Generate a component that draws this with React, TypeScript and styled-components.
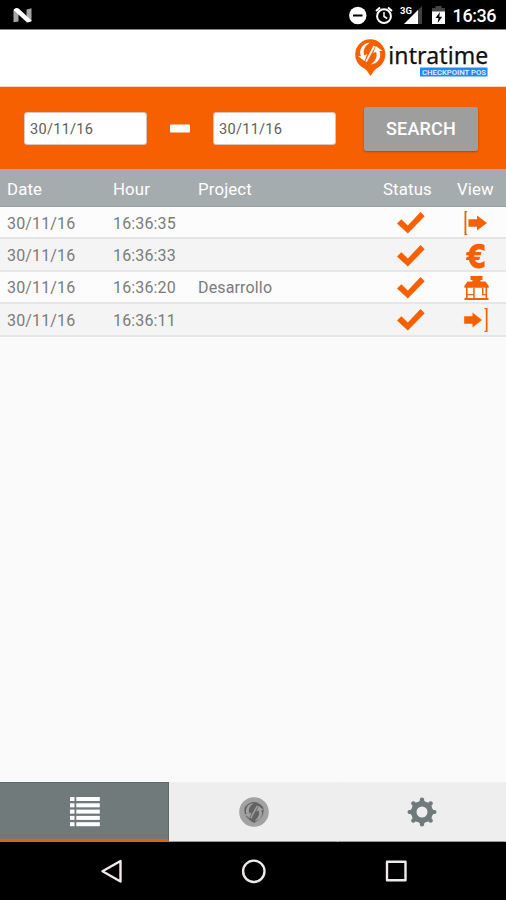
import React from "react";
import styled, { createGlobalStyle } from "styled-components";

const ORANGE = "#f66000";

const GlobalStyle = createGlobalStyle`
  html, body { margin: 0; padding: 0; }
  body { font-family: Roboto, "Liberation Sans", sans-serif; background: #fafafa; }
  *, *::before, *::after { box-sizing: border-box; }
  svg { display: block; }
`;

const Screen = styled.div`
  width: 506px;
  height: 900px;
  display: flex;
  flex-direction: column;
  overflow: hidden;
  background: #fafafa;
`;

const StatusBar = styled.div`
  height: 30px;
  flex: none;
  background: #000;
  border-bottom: 1px solid #8a8a8a;
  display: flex;
  justify-content: space-between;
`;

const Brand = styled.header`
  height: 57px;
  flex: none;
  background: #fff;
  border-bottom: 1px solid #fbd9c3;
  display: flex;
  justify-content: flex-end;
`;

const SearchBar = styled.form`
  height: 82px;
  flex: none;
  margin: 0;
  padding: 1px 28px 0 24px;
  background: ${ORANGE};
  display: flex;
  align-items: center;
`;

const DateInput = styled.input`
  width: 123px;
  height: 33px;
  padding: 1px 0 0 5px;
  border: 1px solid #d5c5ba;
  border-radius: 3px;
  outline: none;
  background: #fff;
  color: #5c5c5c;
  font: 400 14.6px Roboto, sans-serif;
  letter-spacing: 0.25px;
`;

const Dash = styled.span`
  width: 20px;
  height: 8px;
  margin: 0 23px;
  border-radius: 1px;
  background: #fff;
  transform: translateY(-0.5px);
`;

const SearchButton = styled.button`
  width: 114px;
  height: 44px;
  margin-left: auto;
  padding: 0;
  border: 0;
  border-radius: 2px;
  background: #9e9e9e;
  box-shadow: 0 1px 2px rgba(90, 40, 0, 0.45);
  color: #fff;
  font: 500 18px Roboto, sans-serif;
  letter-spacing: 0.2px;
`;

const Table = styled.div`
  flex: 1;
  display: flex;
  flex-direction: column;
`;

const Row = styled.div<{ $shaded?: boolean }>`
  height: 32.4px;
  display: grid;
  grid-template-columns: 106px 85px 185px 70px 60px;
  align-items: center;
  padding: 2px 0 0 7px;
  margin-right: -7px;
  background: ${(p) => (p.$shaded ? "#f4f4f4" : "#fcfcfc")};
  border-bottom: 2px solid #e6e6e6;
  color: #7b7b7b;
  font-size: 16px;
  letter-spacing: 0.15px;
`;

const HeaderRow = styled(Row)`
  height: 38px;
  grid-template-columns: 106px 85px 185px 74px 60px;
  background: #a4acae;
  border-bottom: 1px solid #999fa1;
  color: #fff;
  font-size: 16.8px;
`;

const IconCell = styled.span`
  display: flex;
  justify-content: flex-start;
`;

const CheckCell = styled(IconCell)`
  padding-left: 14px;
`;

const ViewCell = styled(IconCell)`
  padding-left: 10px;
`;

const Tabs = styled.nav`
  height: 60px;
  flex: none;
  display: grid;
  grid-template-columns: 169px 169px 168px;
  background: #eee;
`;

const Tab = styled.div<{ $active?: boolean }>`
  display: flex;
  align-items: center;
  justify-content: center;
  background: ${(p) => (p.$active ? "#707a7a" : "#eeeeee")};
  border-top: 1px solid ${(p) => (p.$active ? "#5f6868" : "#f1f1f1")};
  border-right: 1px solid ${(p) => (p.$active ? "#5f6868" : "#eeeeee")};
  border-bottom: ${(p) => (p.$active ? "3px solid #d9650f" : "1px solid #999")};
  padding: ${(p) => (p.$active ? "2px 0 0 1px" : "0 0 0 1px")};
`;

const NavBar = styled.div`
  height: 58px;
  flex: none;
  background: #000;
`;

const Notification = () => (
  <svg width="60" height="29" viewBox="0 0 60 29">
    <path d="M13.5 9.5l5-1v13l-5 .8zM26.5 9.5l5-1.3v13.4l-5 .8z" fill="#a5a5a5" />
    <path d="M14 9.3q2.5-2.2 5.2-.3L31.5 20.5q-2.4 3-5.5.9L14 10.5z" fill="#fff" />
  </svg>
);

const StatusIcons = () => (
  <svg width="170" height="29" viewBox="336 0 170 29" fontFamily="Roboto, sans-serif">
    <circle cx="357.8" cy="15.5" r="8.7" fill="#fff" />
    <path d="M353 15.5h9.5" stroke="#000" strokeWidth="2" />
    <g fill="none" stroke="#fff" strokeWidth="2">
      <circle cx="384" cy="16.2" r="6.9" />
      <path d="M384 12v4.5l3.2 2" strokeWidth="1.5" />
      <path d="M376 11l4-3.6M392 11l-4-3.6" />
    </g>
    <text x="400" y="14" fontSize="9.5" fontWeight="700" fill="#fff" textLength="12">3G</text>
    <path d="M404 24L422 6v18z" fill="#414141" />
    <path d="M404 24L418 10v14z" fill="#fff" />
    <path d="M432 10V8h3.5V6h6v2h3.5v4h-13z" fill="#454545" />
    <path d="M432 11.5h13V24h-13z" fill="#fff" />
    <path d="M440 12l-4.5 6h3l-.8 5 4.5-6.3h-3z" fill="#000" />
    <text x="452.6" y="22" fontSize="18" fontWeight="500" fill="#fff" textLength="44">16:36</text>
  </svg>
);

const SwirlArrows = () => (
  <>
    <path d="M-2.500-10.500C-9.500-9-12.500-1-8.500 4.500L-11.500 5l7.500 3.500 1.200-7.500-2.500 2C-8-1-7-6.500-2.500-10.500z" />
    <path d="M2.500 10.500C9.500 9 12.500 1 8.500-4.500L11.500-5l-7.500-3.500-1.200 7.500 2.500-2C8 1 7 6.500 2.500 10.500z" />
    <path d="M-3.200 8.500L1.600-8.600l1.800.6L-1.500 9z" />
  </>
);

const Logo = () => (
  <svg width="166" height="56" viewBox="340 30 166 56">
    <path
      d="M370.300 39.300a15 15 0 0 1 15 15c0 7.500-4.500 12-8.800 14.200q-3 2-6 7.500-3-5.500-6-7.400c-5-2.800-9.300-6.800-9.300-14.300a15 15 0 0 1 15.100-15z"
      fill={ORANGE}
    />
    <g transform="translate(370.200 53.600) rotate(12)" fill="#fff">
      <SwirlArrows />
    </g>
    <text x="388.300" y="64.300" fontFamily="Noto Sans, sans-serif" fontWeight="400" fontSize="23" fill="#111" stroke="#111" strokeWidth="0.250" textLength="100" lengthAdjust="spacing">
      intratime
    </text>
    <rect x="420" y="67.500" width="67.500" height="9" fill="#2389f5" />
    <text x="422" y="75" fontFamily="Roboto, sans-serif" fontWeight="500" fontSize="8" fill="#e8f3ff" textLength="64" lengthAdjust="spacingAndGlyphs">
      CHECKPOINT POS
    </text>
  </svg>
);

const Check = () => (
  <svg width="28" height="22" viewBox="0 0 28 22">
    <path d="M0 11.500l4.300-4.300 6.500 6.300L23.500 0l4.200 4.300L10.800 21.500z" fill={ORANGE} />
  </svg>
);

type ViewKind = "exit" | "euro" | "office" | "enter";

const ViewIcon = ({ kind }: { kind: ViewKind }) => (
  <svg width="28" height="26" viewBox="0 0 28 26" fill={ORANGE}>
    {kind === "exit" && (
      <>
        <path d="M1.500 1h2.700v1.200H3.300v21.600h.9V25H1.500z" />
        <path d="M5.500 9.200h8.500V5.500l10 7.500-10 7.500v-3.700H5.500z" />
      </>
    )}
    {kind === "enter" && (
      <>
        <path d="M21.500 1h3v24h-3v-1.200h1.300V2.200h-1.300z" />
        <path d="M1.200 9.200h8.300V5.500l9.500 7.500-9.500 7.500v-3.700H1.200z" />
      </>
    )}
    {kind === "euro" && (
      <>
        <path d="M21.500 2v6.200C16 4.500 11.300 6 11.300 13s5 8.700 10.200 4.900v6.200C13.500 28 5.500 23.500 5.500 13S13.500-1.500 21.500 2z" />
        <path d="M3.700 9H18.500l-.9 3.200H2.800zM3.700 13.800h13.400l-.9 3.200H2.800z" />
      </>
    )}
    {kind === "office" && (
      <>
        <path d="M7.500 1h12v4h-12zM9.500 5h8v2h-8z" />
        <path d="M4.500 6.500h18l3.200 4.500v1.700H1.300V11z" />
        <path d="M3 12h1.600v12H3zM22.500 12h1.600v12h-1.600zM10.200 13h1.500v11h-1.500zM19 13h1.500v7H19zM4 19h7v1.300H4zM19 19h4.500v1.300H19zM1.500 23h24v2h-24z" />
      </>
    )}
  </svg>
);

const ListIcon = () => (
  <svg width="30" height="30" viewBox="0 0 30 30" fill="#fff">
    {[0, 6.3, 12.6, 18.9, 25.2].map((y) => (
      <React.Fragment key={y}>
        <rect x="0" y={y} width="4.500" height="4" />
        <rect x="6.300" y={y} width="23.500" height="4" />
      </React.Fragment>
    ))}
  </svg>
);

const CoinIcon = () => (
  <svg width="30" height="30" viewBox="-15 -15 30 30">
    <circle r="14.800" fill="#a2a2a2" />
    <circle r="10.300" fill="#9a9a9a" />
    <path d="M-9-5Q0-15 9-5Q12 4 0 11Q-12 4-9-5z" fill="#626262" />
    <g transform="rotate(12) scale(0.800)" fill="#a2a2a2">
      <SwirlArrows />
    </g>
  </svg>
);

const GearIcon = () => (
  <svg width="30" height="30" viewBox="-15 -15 30 30" fill="#707a7a">
    {[0, 45, 90, 135, 180, 225, 270, 315].map((a) => (
      <path key={a} transform={`rotate(${a})`} d="M-4.500-9L-2.100-11.500V-13.200Q0-15.800 2.100-13.200V-11.500L4.500-9z" />
    ))}
    <path
      fillRule="evenodd"
      d="M0-10.800a10.800 10.800 0 1 1 0 21.600 10.800 10.800 0 1 1 0-21.600zM0-5.500a5.500 5.500 0 1 0 0 11 5.500 5.500 0 1 0 0-11z"
    />
  </svg>
);

const SystemIcons = () => (
  <svg width="506" height="58" viewBox="0 842 506 58" fill="none" stroke="#f0e9ea" strokeWidth="2.400" strokeLinejoin="round">
    <path d="M120.500 861v20.500L102.500 871.300z" />
    <circle cx="253.800" cy="871.300" r="10.700" />
    <rect x="387" y="861.700" width="18.500" height="18.500" />
  </svg>
);

const entries: { date: string; hour: string; project: string; view: ViewKind }[] = [
  { date: "30/11/16", hour: "16:36:35", project: "", view: "exit" },
  { date: "30/11/16", hour: "16:36:33", project: "", view: "euro" },
  { date: "30/11/16", hour: "16:36:20", project: "Desarrollo", view: "office" },
  { date: "30/11/16", hour: "16:36:11", project: "", view: "enter" },
];

export default function App() {
  return (
    <>
      <GlobalStyle />
      <Screen>
        <StatusBar>
          <Notification />
          <StatusIcons />
        </StatusBar>
        <Brand>
          <Logo />
        </Brand>
        <SearchBar>
          <DateInput defaultValue="30/11/16" />
          <Dash />
          <DateInput defaultValue="30/11/16" />
          <SearchButton type="button">SEARCH</SearchButton>
        </SearchBar>
        <Table>
          <HeaderRow>
            <span>Date</span>
            <span>Hour</span>
            <span>Project</span>
            <span>Status</span>
            <span>View</span>
          </HeaderRow>
          {entries.map((e, i) => (
            <Row key={e.hour} $shaded={i % 2 === 1}>
              <span>{e.date}</span>
              <span>{e.hour}</span>
              <span>{e.project}</span>
              <CheckCell>
                <Check />
              </CheckCell>
              <ViewCell>
                <ViewIcon kind={e.view} />
              </ViewCell>
            </Row>
          ))}
        </Table>
        <Tabs>
          <Tab $active>
            <ListIcon />
          </Tab>
          <Tab>
            <CoinIcon />
          </Tab>
          <Tab>
            <GearIcon />
          </Tab>
        </Tabs>
        <NavBar>
          <SystemIcons />
        </NavBar>
      </Screen>
    </>
  );
}
